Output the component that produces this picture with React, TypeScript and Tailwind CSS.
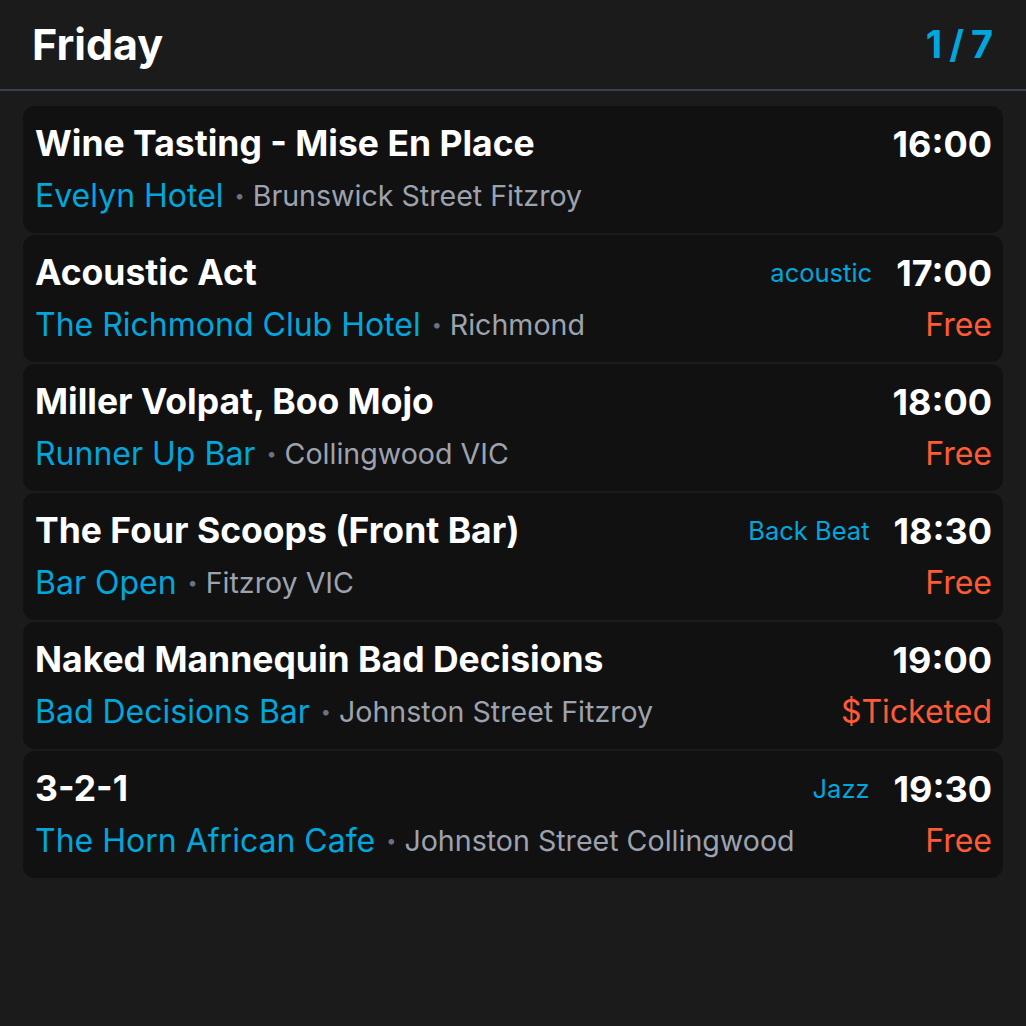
import React from "react";

type Gig = {
  title: string;
  venue: string;
  area: string;
  time: string;
  tag?: string;
  price?: string;
};

const gigs: Gig[] = [
  { title: "Wine Tasting - Mise En Place", venue: "Evelyn Hotel", area: "Brunswick Street Fitzroy", time: "16:00" },
  { title: "Acoustic Act", venue: "The Richmond Club Hotel", area: "Richmond", time: "17:00", tag: "acoustic", price: "Free" },
  { title: "Miller Volpat, Boo Mojo", venue: "Runner Up Bar", area: "Collingwood VIC", time: "18:00", price: "Free" },
  { title: "The Four Scoops (Front Bar)", venue: "Bar Open", area: "Fitzroy VIC", time: "18:30", tag: "Back Beat", price: "Free" },
  { title: "Naked Mannequin Bad Decisions", venue: "Bad Decisions Bar", area: "Johnston Street Fitzroy", time: "19:00", price: "$Ticketed" },
  { title: "3-2-1", venue: "The Horn African Cafe", area: "Johnston Street Collingwood", time: "19:30", tag: "Jazz", price: "Free" },
];

const GigCard = ({ gig }: { gig: Gig }) => (
  <div className="flex h-[127px] justify-between rounded-xl bg-[#111111] pl-[12px] pr-[11px] pt-[16px]">
    <div className="flex flex-col">
      <div className="text-[35.5px] font-bold leading-[44px] text-white">{gig.title}</div>
      <div className="mt-[10px] flex items-center leading-[40px]">
        <span className="text-[32px] text-[#00a6dc]">{gig.venue}</span>
        <span className="ml-[11px] mr-[8px] text-[18px] text-[#6b7280]">•</span>
        <span className="text-[28.6px] text-[#9ca3af]">{gig.area}</span>
      </div>
    </div>
    <div className="flex flex-col items-end">
      <div className="flex items-center gap-6">
        {gig.tag && <span className="text-[25.5px] text-[#00a6dc]">{gig.tag}</span>}
        <span className="text-[36px] font-bold leading-[44px] text-white">{gig.time}</span>
      </div>
      {gig.price && (
        <div className="mt-[10px] text-[32px] leading-[40px] text-[#ff5a36]">{gig.price}</div>
      )}
    </div>
  </div>
);

export default function App() {
  return (
    <div className="h-[1026px] w-[1026px] bg-[#1b1b1b] font-['Inter',sans-serif]">
      <header className="flex h-[91px] items-center justify-between border-b-2 border-[#3a4150] px-[32px]">
        <h1 className="text-[43px] font-bold text-white">Friday</h1>
        <span className="flex gap-[7px] pr-[1px] text-[38px] font-bold text-[#00a6dc]">
          <span>1</span>
          <span>/</span>
          <span>7</span>
        </span>
      </header>
      <div className="flex flex-col gap-[2px] px-[23px] pt-[15px]">
        {gigs.map((g) => (
          <GigCard key={g.time} gig={g} />
        ))}
      </div>
    </div>
  );
}
